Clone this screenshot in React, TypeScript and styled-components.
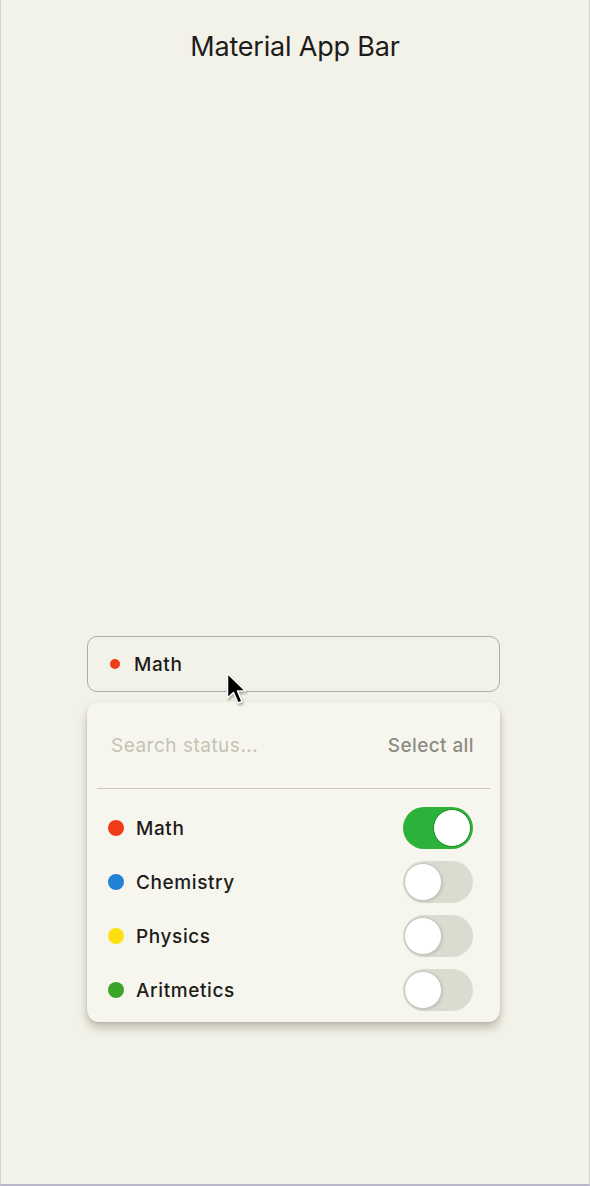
import React, { useState } from "react";
import styled, { createGlobalStyle } from "styled-components";

const Global = createGlobalStyle`
  html, body { margin: 0; padding: 0; }
  body {
    background: #f3f2e8;
    font-family: Inter, "Noto Sans", Roboto, sans-serif;
  }
`;

const Page = styled.div`
  width: 590px;
  height: 1186px;
  box-sizing: border-box;
  border-left: 1px solid #d4d2c8;
  border-right: 1px solid #d4d2c8;
  border-bottom: 2px solid #b9b7c9;
  background: #f3f2e8;
  display: flex;
  flex-direction: column;
  align-items: flex-start;
  padding-left: 86px;
  position: relative;
`;

const Title = styled.h1`
  align-self: stretch;
  margin: 30px 0 0 -86px;
  text-align: center;
  font-size: 27px;
  font-weight: 400;
  color: #1d1c1a;
  line-height: 34px;
  letter-spacing: -0.2px;
`;

const Field = styled.div`
  margin-top: 572px;
  width: 413px;
  height: 56px;
  box-sizing: border-box;
  border: 1px solid #aeada6;
  border-radius: 10px;
  display: flex;
  align-items: center;
  padding-left: 22px;
  gap: 14px;
  position: relative;
`;

const Dot = styled.span<{ $c: string; $s: number }>`
  width: ${(p) => p.$s}px;
  height: ${(p) => p.$s}px;
  border-radius: 50%;
  background: ${(p) => p.$c};
  flex: none;
`;

const Label = styled.span`
  font-size: 19px;
  font-weight: 500;
  color: #1d1c1a;
  letter-spacing: 0.6px;
`;

const Panel = styled.div`
  margin-top: 10px;
  width: 413px;
  box-sizing: border-box;
  border-radius: 12px;
  background: #f7f6ee;
  box-shadow: 0 6px 10px rgba(60, 58, 40, 0.28), 0 1px 3px rgba(60, 58, 40, 0.12);
  padding: 0 10px 5px;
`;

const SearchRow = styled.div`
  height: 86px;
  display: flex;
  align-items: center;
  justify-content: space-between;
  padding: 0 16px 0 14px;
  border-bottom: 1px solid #c9c7ba;
`;

const SearchInput = styled.input`
  border: none;
  outline: none;
  background: transparent;
  font-family: inherit;
  font-size: 19px;
  letter-spacing: 0.5px;
  color: #1d1c1a;
  padding: 0;
  width: 220px;
  &::placeholder { color: #c4c3b2; }
`;

const SelectAll = styled.button`
  border: none;
  background: transparent;
  font-family: inherit;
  font-size: 19px;
  font-weight: 500;
  color: #8d8c84;
  padding: 0;
  letter-spacing: 0.4px;
`;

const List = styled.div`
  display: flex;
  flex-direction: column;
  padding-top: 12px;
`;

const Row = styled.div`
  height: 54px;
  display: flex;
  align-items: center;
  padding: 0 17px 0 11px;
  gap: 12px;
`;

const Spacer = styled.div`
  flex: 1;
`;

const Track = styled.button<{ $on: boolean }>`
  width: 70px;
  height: 42px;
  border-radius: 21px;
  border: none;
  padding: 0;
  position: relative;
  background: ${(p) => (p.$on ? "#2cb23a" : "#dcdbcf")};
  flex: none;
  cursor: pointer;
`;

const Knob = styled.span<{ $on: boolean }>`
  position: absolute;
  top: 2px;
  left: ${(p) => (p.$on ? "30px" : "1px")};
  width: 38px;
  height: 38px;
  box-sizing: border-box;
  border-radius: 50%;
  background: #ffffff;
  border: 1px solid ${(p) => (p.$on ? "#1f8e2c" : "#c8c7bf")};
  box-shadow: ${(p) => (p.$on ? "none" : "1px 1px 3px rgba(0,0,0,0.12)")};
`;

const Cursor = styled.svg`
  position: absolute;
  left: 138px;
  top: 35px;
  width: 22px;
  height: 38px;
  filter: drop-shadow(1px 2px 1px rgba(0, 0, 0, 0.3));
`;

const subjects = [
  { name: "Math", color: "#ef3d1c" },
  { name: "Chemistry", color: "#2283d6" },
  { name: "Physics", color: "#fde012" },
  { name: "Aritmetics", color: "#3aa52a" },
];

export default function App() {
  const [on, setOn] = useState<Record<string, boolean>>({ Math: true });
  return (
    <>
      <Global />
      <Page>
        <Title>Material App Bar</Title>
        <Field>
          <Dot $c="#ef3d1c" $s={10} />
          <Label>Math</Label>
          <Cursor viewBox="0 0 22 38">
            <path
              d="M1.5 1.5 L1.5 26 L7.5 20.5 L12 31 L16 29.5 L11.5 19 L19.5 19 Z"
              fill="#000"
              stroke="#fff"
              strokeWidth="1.5"
              strokeLinejoin="round"
            />
          </Cursor>
        </Field>
        <Panel>
          <SearchRow>
            <SearchInput placeholder="Search status..." />
            <SelectAll>Select all</SelectAll>
          </SearchRow>
          <List>
            {subjects.map((s) => (
              <Row key={s.name}>
                <Dot $c={s.color} $s={16} />
                <Label>{s.name}</Label>
                <Spacer />
                <Track
                  $on={!!on[s.name]}
                  onClick={() => setOn({ ...on, [s.name]: !on[s.name] })}
                >
                  <Knob $on={!!on[s.name]} />
                </Track>
              </Row>
            ))}
          </List>
        </Panel>
      </Page>
    </>
  );
}
